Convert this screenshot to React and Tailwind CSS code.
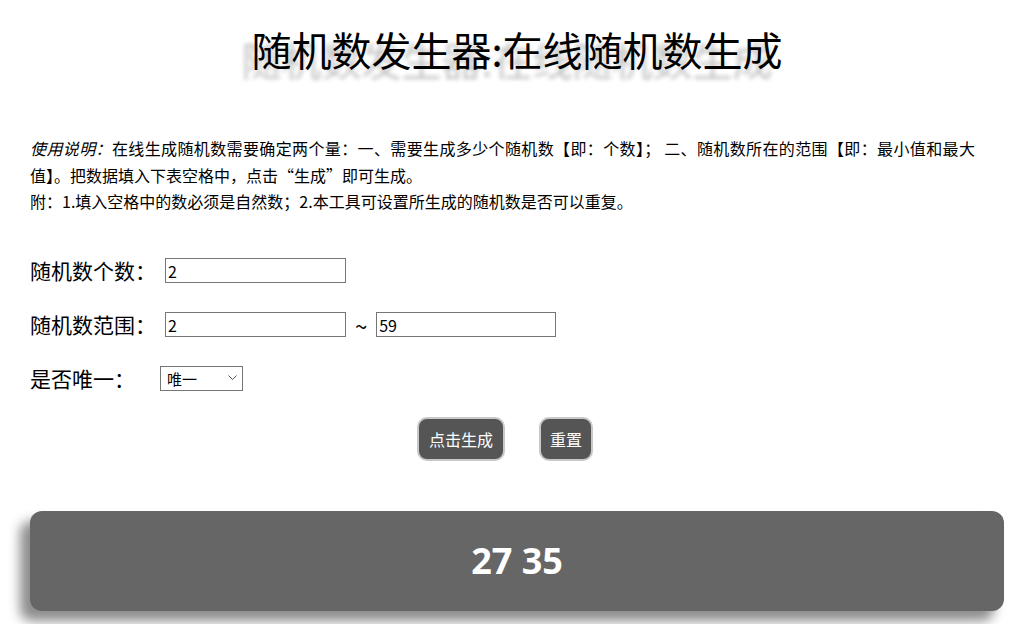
import React, { useState } from "react";

const cjk = { fontFamily: '"Microsoft YaHei", "Noto Sans CJK SC", "Noto Sans", sans-serif' };

const App = () => {
  const [count, setCount] = useState("2");
  const [min, setMin] = useState("2");
  const [max, setMax] = useState("59");
  const [unique, setUnique] = useState("1");
  const [result] = useState("27 35");

  return (
    <div className="bg-white min-h-screen pl-[30px] pr-[23px] text-black" style={cjk}>
      {/* title with grey shadow */}
      <h1 className="pt-[19px] text-center text-[40px] leading-[60px] font-normal [text-shadow:-10px_10px_4px_#c4c4c4]">
        随机数发生器:在线随机数生成
      </h1>

      <div className="mt-[56px] w-[945px] text-justify text-[16px] leading-[26.5px]">
        <p>
          <i>使用说明：</i>
          <span>在线生成随机数需要确定两个量：一、需要生成多少个随机数【即：个数】； 二、随机数所在的范围【即：最小值和最大</span>
          <span>值】。把数据填入下表空格中，点击“生成”即可生成。</span>
        </p>
        <p>附：1.填入空格中的数必须是自然数；2.本工具可设置所生成的随机数是否可以重复。</p>
      </div>

      <form className="mt-[29px] flex flex-col">
        <div className="flex h-[54px] items-center">
          <label className="text-[21px] w-[135px]">随机数个数：</label>
          <input
            type="text"
            value={count}
            onChange={(e) => setCount(e.target.value)}
            className="w-[181px] h-[25px] border border-[#767676] pl-[2px] text-[16px] outline-none"
          />
        </div>
        <div className="flex h-[54px] items-center">
          <label className="text-[21px] w-[135px]">随机数范围：</label>
          <input
            type="text"
            value={min}
            onChange={(e) => setMin(e.target.value)}
            className="w-[181px] h-[25px] border border-[#767676] pl-[2px] text-[16px] outline-none"
          />
          <span className="mx-[9px] text-[22px] leading-none">~</span>
          <input
            type="text"
            value={max}
            onChange={(e) => setMax(e.target.value)}
            className="w-[180px] h-[25px] border border-[#767676] pl-[2px] text-[16px] outline-none"
          />
        </div>
        <div className="flex h-[54px] items-center">
          <label className="text-[21px] w-[130px]">是否唯一：</label>
          <div className="relative">
            <select
              value={unique}
              onChange={(e) => setUnique(e.target.value)}
              className="appearance-none w-[83px] h-[25px] border border-[#767676] bg-white pl-[6px] text-[15px] outline-none"
            >
              <option value="1">唯一</option>
              <option value="0">不唯一</option>
            </select>
            <svg
              className="absolute right-[6px] top-[9px] pointer-events-none"
              width="9"
              height="6"
              viewBox="0 0 9 6"
              fill="none"
              stroke="#555"
              strokeWidth="1"
            >
              <path d="M0.5 0.5 L4.5 4.5 L8.5 0.5" />
            </svg>
          </div>
        </div>

        <div className="mt-[11px] flex pl-[387px] gap-[34px]">
          <button
            type="button"
            className="h-[44px] px-[10px] rounded-[10px] border-2 border-[#c8c8c8] bg-[#555555] text-white text-[16px]"
          >
            点击生成
          </button>
          <button
            type="reset"
            className="h-[44px] px-[9px] rounded-[10px] border-2 border-[#c8c8c8] bg-[#555555] text-white text-[16px]"
          >
            重置
          </button>
        </div>
      </form>

      <div className="mt-[50px] h-[100px] rounded-[12px] bg-[#666666] flex items-center justify-center shadow-[-10px_10px_12px_rgba(0,0,0,0.45)]">
        <span className="text-white text-[36px] font-bold" style={{ fontFamily: '"Open Sans", "Noto Sans", sans-serif' }}>
          {result}
        </span>
      </div>
    </div>
  );
};

export default App;
